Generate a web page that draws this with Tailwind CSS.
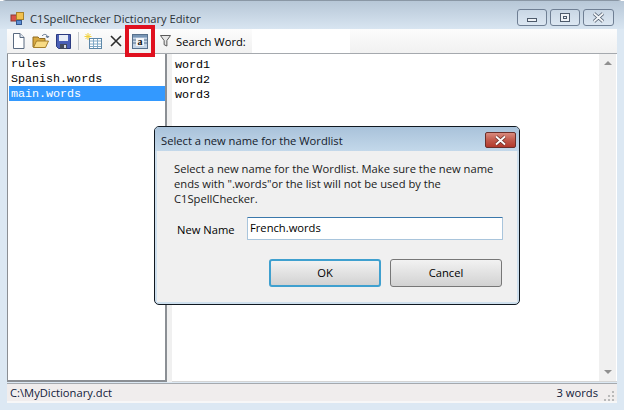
<!doctype html>
<html lang="en">

<head>
	<meta charset="UTF-8" />
	<script src="https://cdn.jsdelivr.net/npm/@tailwindcss/browser@4"></script>
	<title>C1SpellChecker Dictionary Editor</title>
</head>

<body class="bg-white">
	<div class="relative w-[624px] h-[410px] overflow-hidden font-['Open_Sans','Noto_Sans',sans-serif] text-[11.2px] text-black">
		<!-- main window -->
		<div class="flex flex-col w-[624px] h-[410px] bg-[#dce8f3] rounded-t-[6px] border-t border-t-[#8a97a5]">
			<div class="flex items-start h-[28px] bg-gradient-to-b from-[#b7c7d7] to-[#d8e5f1] pl-[10px]">
				<svg class="mt-[10px]" width="16" height="16" viewBox="0 0 16 16">
					<rect x="1" y="4" width="6" height="6" fill="#d9534a" stroke="#8c3a35" />
					<rect x="6.5" y="1.5" width="7" height="7" fill="#f2c14e" stroke="#a8822a" />
					<rect x="6.5" y="9.5" width="5" height="4" fill="#5c8fd6" stroke="#35588f" />
				</svg>
				<span class="ml-[4px] mt-[9px] leading-[17px] text-[#2b3238]">C1SpellChecker Dictionary Editor</span>
				<div class="flex gap-[3px] ml-auto mr-[10px] mt-[8px]">
					<div class="flex items-center justify-center w-[30px] h-[17px] rounded-[3px] border border-[#6f7f94] bg-gradient-to-b from-[#c9d7e5] to-[#dce7f2]">
						<div class="w-[10px] h-[4px] mt-[4px] bg-[#eef2f6] border border-[#4d5a6b]"></div>
					</div>
					<div class="flex items-center justify-center w-[30px] h-[17px] rounded-[3px] border border-[#6f7f94] bg-gradient-to-b from-[#c9d7e5] to-[#dce7f2]">
						<div class="flex items-center justify-center w-[10px] h-[9px] bg-[#eef2f6] border border-[#4d5a6b]">
							<div class="w-[4px] h-[3px] border border-[#4d5a6b]"></div>
						</div>
					</div>
					<div class="flex items-center justify-center w-[31px] h-[17px] rounded-[3px] border border-[#6f7f94] bg-gradient-to-b from-[#c9d7e5] to-[#dce7f2]">
						<svg width="13" height="11" viewBox="0 0 13 11">
							<path d="M2 1.500 L11 9.500 M11 1.500 L2 9.500" stroke="#4d5a6b" stroke-width="3.400" />
							<path d="M2 1.500 L11 9.500 M11 1.500 L2 9.500" stroke="#f2f5f8" stroke-width="1.800" />
						</svg>
					</div>
				</div>
			</div>

			<div class="flex flex-col flex-1 mx-[7px] mb-[7px]">
				<!-- toolbar -->
				<div class="flex items-center shrink-0 h-[25px] bg-gradient-to-b from-[#fcfcfc] to-[#f1f1f1] border-b border-[#a5a9ae] pl-[5px]">
					<svg width="13" height="16" viewBox="0 0 13 16">
						<path d="M1.500 .5 H8 L12 4.500 V15.500 H1.500 Z" fill="#fff" stroke="#5a6a80" />
						<path d="M8 .5 V4.500 H12" fill="#dfe6ef" stroke="#5a6a80" />
					</svg>
					<svg class="ml-[7px]" width="18" height="16" viewBox="0 0 18 16">
						<path d="M1 14 V4 H6 L7.500 5.500 H13 V14 Z" fill="#d9a93f" stroke="#8f6a20" />
						<path d="M1.500 14.500 L4.500 8 H16.500 L13.500 14.500 Z" fill="#f8db85" stroke="#a57f2c" />
						<path d="M10 3 C12 0.500 15 1 15.500 4 M14 3 L15.500 5 L17 3" fill="none" stroke="#5c6f8c" />
					</svg>
					<svg class="ml-[6px]" width="15" height="15" viewBox="0 0 15 15">
						<path d="M.5 .5 H14.500 V14.500 H2.500 L.5 12.500 Z" fill="#4a5fb5" stroke="#2b3a80" />
						<rect x="3" y="1" width="9" height="6" fill="#e8edf7" />
						<rect x="4" y="10" width="7" height="5" fill="#444b5c" />
						<rect x="8" y="11" width="2" height="3" fill="#d5d9e2" />
					</svg>
					<div class="w-px h-[18px] ml-[7px] bg-[#c3c7cb]"></div>
					<svg class="ml-[5px]" width="18" height="17" viewBox="0 0 18 17">
						<path d="M4 0 V7 M0.500 3.500 H7.500 M1.500 1 L6.500 6 M6.500 1 L1.500 6" stroke="#f2d23e" />
						<rect x="5.500" y="5.500" width="12" height="10" fill="#fff" stroke="#5d87a8" />
						<path d="M6 8 H17 M6 11 H17 M6 13.500 H17 M9.500 6 V15 M13.500 6 V15" stroke="#7fa8c6" />
					</svg>
					<svg class="ml-[8px]" width="12" height="12" viewBox="0 0 12 12">
						<path d="M1 1 L11 11 M11 1 L1 11" stroke="#2c2c2c" stroke-width="1.600" />
					</svg>
					<svg class="ml-[10px]" width="16" height="15" viewBox="0 0 16 15">
						<rect x=".5" y=".5" width="15" height="14" fill="#c5d5e6" stroke="#56708c" />
						<rect x="1" y="1" width="14" height="2.500" fill="#7896b5" />
						<rect x="4" y="4" width="8" height="8" fill="#f4f6f8" />
						<path d="M1 6 H4 M1 9 H4 M12 6 H15 M12 9 H15" stroke="#56708c" />
						<text x="8" y="11" text-anchor="middle" font-family="Liberation Serif" font-weight="700" font-size="10" fill="#111">a</text>
					</svg>
					<svg class="ml-[12px]" width="11" height="12" viewBox="0 0 12 13">
						<path d="M.5 .5 H11.500 L7.500 6 V12 L4.500 10.500 V6 Z" fill="#e6e6e6" stroke="#4a4a4a" />
					</svg>
					<span class="ml-[5px] leading-[17px]">Search Word:</span>
					<div class="self-start ml-[6px] w-[98px] h-[24px] bg-white"></div>
				</div>

				<!-- lists -->
				<div class="flex shrink-0 h-[328px]">
					<div class="w-[160px] border-r-2 border-b-2 border-l border-[#8b8f94] bg-white pt-[2px] pl-px font-['Liberation_Mono',monospace] text-[11.7px] leading-[15px]">
						<div class="pl-[2px] pt-px h-[15px]">rules</div>
						<div class="pl-[2px] pt-px h-[15px]">Spanish.words</div>
						<div class="pl-[2px] pt-px h-[15px] bg-[#3399ff] text-white">main.words</div>
					</div>
					<div class="w-[5px] bg-[#f0f0f0]"></div>
					<div class="flex flex-1 bg-white border-b border-[#d5d5d5]">
						<div class="flex-1 pt-[4px] pl-[3px] font-['Liberation_Mono',monospace] text-[11.7px] leading-[15px]">
							<div>word1</div>
							<div>word2</div>
							<div>word3</div>
						</div>
						<div class="flex flex-col justify-between items-center w-[17px] py-[7px] mr-px bg-[#f0f0f0]">
							<div class="w-0 h-0 border-x-[4px] border-x-transparent border-b-[4px] border-b-[#8f8f8f]"></div>
							<div class="w-0 h-0 border-x-[4px] border-x-transparent border-t-[4px] border-t-[#8f8f8f]"></div>
						</div>
					</div>
				</div>

				<!-- status bar -->
				<div class="flex items-center shrink-0 h-[20px] mt-px bg-[#f0eded] border-t border-[#a5a9ae] border-b-2 border-b-[#f7f7f7] pl-[3px] pt-px">
					<span class="text-[#111a3a]">C:\MyDictionary.dct</span>
					<span class="ml-auto mr-[19px] text-[#111a3a]">3 words</span>
					<svg class="absolute left-[604px] top-[390px]" width="11" height="11" viewBox="0 0 11 11">
						<path d="M8 1 h2 v2 h-2 z M4 5 h2 v2 h-2 z M8 5 h2 v2 h-2 z M0 9 h2 v2 h-2 z M4 9 h2 v2 h-2 z M8 9 h2 v2 h-2 z" fill="#b9b9b9" />
					</svg>
				</div>
			</div>
		</div>

		<!-- dialog -->
		<div class="absolute left-[154px] top-[126px] flex flex-col w-[366px] h-[179px] rounded-[5px] border border-[#101820] bg-[#cfe0ee]">
			<div class="flex items-start shrink-0 h-[24px] bg-gradient-to-b from-[#a9c2da] to-[#c3d8ea] pl-[6px] rounded-t-[4px]">
				<span class="mt-[5px] leading-[17px] text-[#15202b]">Select a new name for the Wordlist</span>
				<div class="flex items-center justify-center w-[31px] h-[16px] ml-auto mr-[3px] mt-[5px] rounded-[2px] border border-[#6b2f2a] bg-gradient-to-b from-[#d88a7e] via-[#c25a4c] to-[#b2382b]">
					<svg width="13" height="11" viewBox="0 0 13 11">
						<path d="M2 1.500 L11 9.500 M11 1.500 L2 9.500" stroke="#6b2f2a" stroke-width="3.400" />
						<path d="M2 1.500 L11 9.500 M11 1.500 L2 9.500" stroke="#fff" stroke-width="1.800" />
					</svg>
				</div>
			</div>
			<div class="flex flex-col flex-1 mx-[2px] mb-[2px] bg-[#f0f0f0] pt-[10px] pl-[17px]">
				<p class="w-[340px] leading-[15px] text-[#1a1a1a]">Select a new name for the Wordlist. Make sure the new name<br />ends with ".words"or the list will not be used by the<br />C1SpellChecker.</p>
				<div class="flex items-center mt-[11px] ml-[3px]">
					<span class="w-[70px] mt-[3px]">New Name</span>
					<div class="flex items-center w-[256px] h-[23px] bg-white rounded-[1px] border border-[#a9c5dc] border-t-[#3a78ab] pl-[2px]">French.words</div>
				</div>
				<div class="flex gap-[9px] mt-[19px] ml-[95px]">
					<div class="flex items-center justify-center w-[112px] h-[28px] rounded-[3px] border-2 border-[#3fa0cf] bg-gradient-to-b from-[#f2f2f2] to-[#d2d2d2]">OK</div>
					<div class="flex items-center justify-center w-[112px] h-[28px] rounded-[3px] border border-[#777] bg-gradient-to-b from-[#f2f2f2] to-[#d2d2d2]">Cancel</div>
				</div>
			</div>
		</div>

		<!-- red callout round the toolbar button -->
		<div class="absolute left-[125px] top-[25px] w-[30px] h-[32px] border-4 border-[#e0101f]"></div>
	</div>
</body>

</html>
